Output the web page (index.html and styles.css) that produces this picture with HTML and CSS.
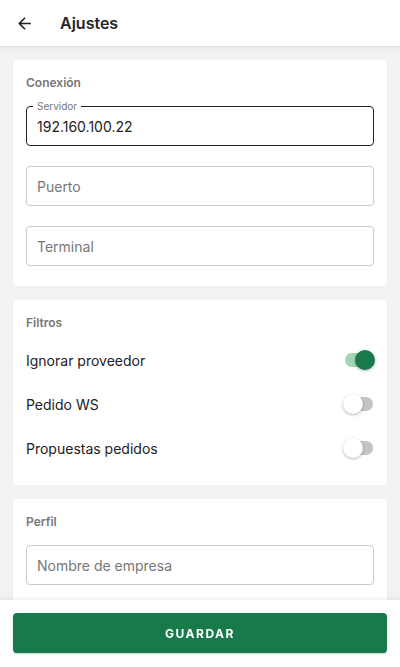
FILE: index.html
```html
<!DOCTYPE html>
<html lang="es">
<head>
  <meta charset="UTF-8">
  <title>Ajustes</title>
  <meta name="viewport" content="width=device-width, initial-scale=1.0">
  <link rel="stylesheet" href="styles.css">
</head>
<body>
  <header class="barra">
    <button class="volver" aria-label="Volver">
      <svg width="19" height="19" viewBox="0 0 24 24"><path d="M20 11H7.83l5.59-5.59L12 4l-8 8 8 8 1.41-1.41L7.83 13H20v-2z" fill="#222"/></svg>
    </button>
    <h1>Ajustes</h1>
  </header>

  <main class="contenido">
    <section class="tarjeta">
      <h2>Conexión</h2>
      <div class="campo activo">
        <span class="etiqueta">Servidor</span>
        <input type="text" value="192.160.100.22">
      </div>
      <div class="campo">
        <input type="text" placeholder="Puerto">
      </div>
      <div class="campo">
        <input type="text" placeholder="Terminal">
      </div>
    </section>

    <section class="tarjeta">
      <h2>Filtros</h2>
      <div class="opciones">
        <label class="opcion">Ignorar proveedor <span class="interruptor encendido"></span></label>
        <label class="opcion">Pedido WS <span class="interruptor"></span></label>
        <label class="opcion">Propuestas pedidos <span class="interruptor"></span></label>
      </div>
    </section>

    <section class="tarjeta">
      <h2>Perfil</h2>
      <div class="campo">
        <input type="text" placeholder="Nombre de empresa">
      </div>
      <div class="campo">
        <input type="text" placeholder="Dirección">
      </div>
    </section>
  </main>

  <footer class="pie">
    <button class="guardar">GUARDAR</button>
  </footer>
</body>
</html>
```

FILE: styles.css
```css
body {
  margin: 0;
  font-family: 'Inter', 'Roboto', sans-serif;
  background: #f1f2f4;
  color: #222;
}
.barra {
  height: 46px;
  background: white;
  display: flex;
  align-items: center;
  gap: 26px;
  padding: 0 14px;
  box-shadow: 0 1px 3px rgba(0,0,0,0.12);
  position: relative;
}
.volver {
  background: none;
  border: none;
  padding: 0;
  width: 20px;
  height: 20px;
  display: flex;
  align-items: center;
  justify-content: center;
}
.barra h1 {
  margin: 0;
  font-size: 16px;
  font-weight: 600;
  color: #262626;
}
.contenido {
  display: flex;
  flex-direction: column;
  gap: 14px;
  padding: 14px 13px 100px;
}
.tarjeta {
  background: white;
  border-radius: 4px;
  padding: 16px 13px 20px;
  display: flex;
  flex-direction: column;
  gap: 20px;
}
.tarjeta h2 {
  margin: 0 0 -4px;
  font-size: 12px;
  font-weight: 600;
  color: #777;
  line-height: 14px;
}
.campo {
  position: relative;
  height: 40px;
  border: 1px solid #c9c9c9;
  border-radius: 4px;
  box-sizing: border-box;
}
.campo.activo {
  border-color: #222;
}
.campo input {
  width: 100%;
  height: 100%;
  box-sizing: border-box;
  border: none;
  background: none;
  outline: none;
  padding: 0 10px;
  font-family: inherit;
  font-size: 14px;
  color: #222;
}
.campo input::placeholder {
  color: #777;
}
.etiqueta {
  position: absolute;
  top: -7px;
  left: 6px;
  padding: 0 4px;
  background: white;
  font-size: 10px;
  line-height: 12px;
  color: #777;
}
.opciones {
  display: flex;
  flex-direction: column;
  margin: -8px 0 -5px;
}
.opcion {
  height: 44px;
  display: flex;
  align-items: center;
  justify-content: space-between;
  font-size: 14px;
  color: #222;
}
.interruptor {
  position: relative;
  width: 28px;
  height: 14px;
  border-radius: 7px;
  background: #c4c4c4;
  margin-right: 1px;
}
.interruptor::after {
  content: '';
  position: absolute;
  top: -3px;
  left: -2px;
  width: 20px;
  height: 20px;
  border-radius: 50%;
  background: white;
  box-shadow: 0 1px 3px rgba(0,0,0,0.3);
}
.interruptor.encendido {
  background: #a3d3b8;
}
.interruptor.encendido::after {
  left: 10px;
  background: #187a4a;
}
.pie {
  position: fixed;
  left: 0;
  right: 0;
  bottom: 0;
  height: 67px;
  background: white;
  box-shadow: 0 -1px 4px rgba(0,0,0,0.08);
  padding: 13px 13px 14px;
  box-sizing: border-box;
}
.guardar {
  width: 100%;
  height: 40px;
  border: none;
  border-radius: 4px;
  background: #177a4a;
  color: white;
  font-family: inherit;
  font-size: 12px;
  font-weight: 700;
  letter-spacing: 1.5px;
  box-shadow: 0 1px 2px rgba(0,0,0,0.2);
}
```
